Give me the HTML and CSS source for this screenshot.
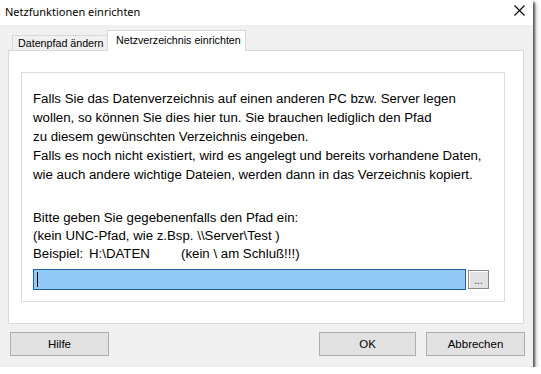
FILE: index.html
```
<!DOCTYPE html>
<html lang="de">
<head>
    <meta charset="UTF-8">
    <title>Netzfunktionen einrichten</title>
    <link rel="stylesheet" href="styles.css">
</head>
<body>

    <div class="window">
        <div class="titlebar">
            <span class="title">Netzfunktionen einrichten</span>
            <svg class="close" width="11" height="11" viewBox="0 0 11 11">
                <path d="M0.5 0.5 L10.5 10.5 M10.5 0.5 L0.5 10.5" stroke="#000" stroke-width="1.1" fill="none"/>
            </svg>
        </div>

        <div class="tabs">
            <div class="tab">Datenpfad ändern</div>
            <div class="tab active">Netzverzeichnis einrichten</div>
        </div>

        <div class="panel">
            <div class="group">
                <div class="info">
                    <p>Falls Sie das Datenverzeichnis auf einen anderen PC bzw. Server legen</p>
                    <p>wollen, so können Sie dies hier tun. Sie brauchen lediglich den Pfad</p>
                    <p>zu diesem gewünschten Verzeichnis eingeben.</p>
                    <p>Falls es noch nicht existiert, wird es angelegt und bereits vorhandene Daten,</p>
                    <p>wie auch andere wichtige Dateien, werden dann in das Verzeichnis kopiert.</p>
                </div>
                <div class="hint">
                    <p>Bitte geben Sie gegebenenfalls den Pfad ein:</p>
                    <p>(kein UNC-Pfad, wie z.Bsp. \\Server\Test )</p>
                    <p class="example"><span class="label">Beispiel:</span><span class="sample">H:\DATEN</span><span>(kein \ am Schluß!!!)</span></p>
                </div>
                <div class="pathrow">
                    <div class="pathfield"><span class="caret"></span></div>
                    <div class="browse">...</div>
                </div>
            </div>
        </div>

        <div class="buttons">
            <button class="btn">Hilfe</button>
            <div class="spacer"></div>
            <button class="btn ok">OK</button>
            <button class="btn">Abbrechen</button>
        </div>
    </div>

</body>
</html>
```

FILE: styles.css
```
* {
    box-sizing: border-box;
}

body {
    margin: 0;
    background-color: #ffffff;
}

.window {
    width: 533px;
    height: 367px;
    background-color: #f0f0f0;
    box-shadow: 2px 2px 2px rgba(0, 0, 0, 0.6), 4px 4px 4px rgba(0, 0, 0, 0.15);
    display: flex;
    flex-direction: column;
}

.titlebar {
    height: 25px;
    background-color: #ffffff;
    display: flex;
    align-items: center;
    justify-content: space-between;
    padding: 0 8px 0 5px;
}

.title {
    font-family: "Noto Sans", sans-serif;
    font-size: 11px;
    color: #000;
    margin-top: -2px;
}

.close {
    margin-top: -4px;
}

.tabs {
    display: flex;
    align-items: flex-end;
    height: 25px;
    padding-left: 12px;
    font-family: "Liberation Sans", Arial, sans-serif;
    font-size: 10.7px;
    color: #000;
    position: relative;
    z-index: 1;
}

.tab {
    width: 95px;
    height: 15px;
    line-height: 15px;
    padding-left: 5px;
    border: 1px solid #d9d9d9;
    border-bottom: none;
    border-right: none;
    background-color: #f0f0f0;
    white-space: nowrap;
}

.tab.active {
    width: 139px;
    height: 21px;
    line-height: 18px;
    padding-left: 8px;
    border-right: 1px solid #d9d9d9;
    margin-bottom: -1px;
    background-color: #ffffff;
}

.panel {
    margin: 0 9px 0 8px;
    height: 274px;
    background-color: #ffffff;
    border: 1px solid #d9d9d9;
    padding: 21px 18px 0 12px;
}

.group {
    height: 230px;
    border: 1px solid #dcdcdc;
    padding: 16px 10px 0 11px;
    font-family: "Liberation Sans", Arial, sans-serif;
    font-size: 13.25px;
    color: #000;
}

.group p {
    margin: 0;
    line-height: 19px;
    white-space: nowrap;
}

.hint {
    margin-top: 25px;
}

.hint p {
    line-height: 18px;
}

.example {
    display: flex;
}

.label {
    width: 56px;
    flex-shrink: 0;
}

.sample {
    width: 92px;
    flex-shrink: 0;
}

.pathrow {
    display: flex;
    align-items: flex-start;
    margin-top: 6px;
}

.pathfield {
    width: 433px;
    height: 21px;
    background-color: #91c9f7;
    border: 1px solid #1f5f9f;
    padding-left: 3px;
    display: flex;
    align-items: center;
}

.caret {
    width: 1px;
    height: 15px;
    background-color: #000;
}

.browse {
    width: 21px;
    height: 19px;
    margin-left: 2px;
    margin-top: 1px;
    background-color: #e1e1e1;
    border: 1px solid #8a8a8a;
    box-shadow: inset 1px 1px 0 #ffffff;
    font-family: "Liberation Sans", Arial, sans-serif;
    font-size: 10px;
    line-height: 20px;
    text-align: center;
    color: #333;
}

.buttons {
    display: flex;
    gap: 10px;
    padding: 8px 8px 0 10px;
}

.spacer {
    flex: 1;
}

.btn {
    width: 99px;
    height: 24px;
    background-color: #e1e1e1;
    border: 1px solid #adadad;
    font-family: "Liberation Sans", Arial, sans-serif;
    font-size: 11.5px;
    color: #000;
    padding: 0;
}

.btn.ok {
    width: 97px;
}
```
